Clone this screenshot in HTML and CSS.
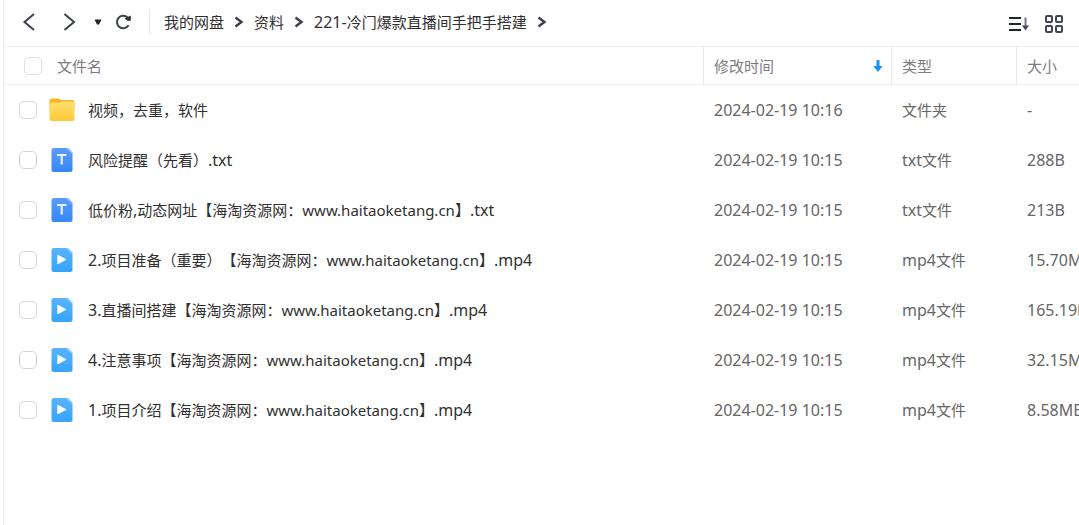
FILE: index.html
```html
<!DOCTYPE html>
<html lang="zh-CN">
<head>
<meta charset="utf-8">
<title>我的网盘</title>
<link rel="stylesheet" href="styles.css">
</head>
<body>
<svg class="sprite" aria-hidden="true">
  <defs>
    <linearGradient id="gold" x1="0" y1="0" x2="0" y2="1"><stop offset="0" stop-color="#ffdf70"/><stop offset="1" stop-color="#ffc935"/></linearGradient>
    <linearGradient id="blue" x1="0" y1="0" x2="0" y2="1"><stop offset="0" stop-color="#5b9bff"/><stop offset="1" stop-color="#3687f8"/></linearGradient>
    <linearGradient id="sky" x1="0" y1="0" x2="0" y2="1"><stop offset="0" stop-color="#58b4ff"/><stop offset="1" stop-color="#36a3fc"/></linearGradient>
  </defs>
  <symbol id="folder" viewBox="0 0 26 26">
    <path d="M.5 3.500Q.5 1.500 2.500 1.500H9.500L12.500 3H23Q25.500 3 25.500 5.500V12H.5Z" fill="#f9b325"/>
    <path d="M.5 8Q.5 5.500 3.500 5.500H11L14 4.500H22.500Q25.500 4.500 25.500 7.500V21.500Q25.500 24 23 24H3Q.5 24 .5 21.500Z" fill="url(#gold)"/>
  </symbol>
  <symbol id="txt" viewBox="0 0 26 26">
    <path d="M5 1H17L23.500 7V22.500Q23.500 25 21 25H5Q2.500 25 2.500 22.500V3.500Q2.500 1 5 1Z" fill="url(#blue)"/>
    <path d="M17 1H19L23.500 5.500V7Z" fill="#6fabff"/>
    <path d="M8 8H17.500M12.750 8V17.500" stroke="#e4efff" stroke-width="2.200" fill="none"/>
  </symbol>
  <symbol id="video" viewBox="0 0 26 26">
    <path d="M5 1H17L23.500 7V22.500Q23.500 25 21 25H5Q2.500 25 2.500 22.500V3.500Q2.500 1 5 1Z" fill="url(#sky)"/>
    <path d="M17 1H19L23.500 5.500V7Z" fill="#78c4ff"/>
    <path d="M9 8.500L16.500 12.500L9 16.500Z" fill="#fff" stroke="#fff" stroke-width="1.400" stroke-linejoin="round"/>
  </symbol>
  <symbol id="chevron" viewBox="0 0 10 12"><path d="M1.500 1.500L7.500 6L1.500 10.500" fill="none" stroke="#3c3e4b" stroke-width="2.400"/></symbol>
</svg>
<main class="panel">
  <header class="toolbar">
    <nav class="history" aria-label="导航">
      <button class="tool" aria-label="后退"><svg width="20" height="20" viewBox="0 0 20 20"><path d="M15 2L5.500 10L15 18" class="stroke"/></svg></button>
      <button class="tool tool-forward" aria-label="前进"><svg width="20" height="20" viewBox="0 0 20 20"><path d="M5.500 2L15 10L5.500 18" class="stroke"/></svg></button>
      <button class="tool tool-small" aria-label="历史记录"><svg width="8" height="6" viewBox="0 0 8 6"><path d="M.5 .5H7.500L5 5.500H3Z" fill="#23252d"/></svg></button>
      <button class="tool tool-refresh" aria-label="刷新"><svg width="18" height="18" viewBox="0 0 18 18"><path d="M13.500 4.300A6.300 6.300 0 1 0 14.600 12.300" class="stroke"/><path d="M10.500 5.500L16.800 2.500V7.500L14 8Z" fill="#2f323c"/></svg></button>
    </nav>
    <nav class="crumbs" aria-label="路径">
      <a href="#">我的网盘</a><svg class="sep"><use href="#chevron"/></svg>
      <a href="#">资料</a><svg class="sep"><use href="#chevron"/></svg>
      <a href="#"><span class="latin">221-</span>冷门爆款直播间手把手搭建</a><svg class="sep"><use href="#chevron"/></svg>
    </nav>
    <div class="views">
      <button class="tool" aria-label="排序"><svg width="20" height="16" viewBox="0 0 20 16"><path d="M0 2H12M0 8H12M0 14H12" stroke="#23252d" stroke-width="2"/><path d="M16.500 1.500V12" stroke="#747985" stroke-width="2"/><path d="M13 9.500H20L16.500 14.500Z" fill="#444954"/></svg></button>
      <button class="tool" aria-label="网格视图"><svg width="20" height="20" viewBox="0 0 20 20"><g fill="none" stroke="#414650" stroke-width="2"><rect x="2" y="2" width="6" height="6" rx="1"/><rect x="12" y="2" width="6" height="6" rx="1"/><rect x="2" y="12" width="6" height="6" rx="1"/><rect x="12" y="12" width="6" height="6" rx="1"/></g></svg></button>
    </div>
  </header>
  <table class="files">
    <colgroup><col><col class="col-date"><col class="col-type"><col class="col-size"></colgroup>
    <thead>
      <tr>
        <th scope="col"><div class="name name-head"><input type="checkbox" class="check" aria-label="全选">文件名</div></th>
        <th scope="col"><div class="sort">修改时间<svg width="10" height="14" viewBox="0 0 10 14"><path d="M3.500 1H6.500V7H9.500L5 13L.5 7H3.500Z" fill="#0f95fb"/></svg></div></th>
        <th scope="col">类型</th>
        <th scope="col">大小</th>
      </tr>
    </thead>
    <tbody>
      <tr><td><label class="name"><input type="checkbox" class="check"><svg class="icon"><use href="#folder"/></svg><span>视频，去重，软件</span></label></td><td><span class="latin">2024-02-19 10:16</span></td><td>文件夹</td><td><span class="latin">-</span></td></tr>
      <tr><td><label class="name"><input type="checkbox" class="check"><svg class="icon"><use href="#txt"/></svg><span>风险提醒（先看）<span class="latin">.txt</span></span></label></td><td><span class="latin">2024-02-19 10:15</span></td><td><span class="latin">txt</span>文件</td><td><span class="latin">288B</span></td></tr>
      <tr><td><label class="name"><input type="checkbox" class="check"><svg class="icon"><use href="#txt"/></svg><span>低价粉<span class="latin">,</span>动态网址【海淘资源网：<span class="latin site">www.haitaoketang.cn</span>】<span class="latin">.txt</span></span></label></td><td><span class="latin">2024-02-19 10:15</span></td><td><span class="latin">txt</span>文件</td><td><span class="latin">213B</span></td></tr>
      <tr><td><label class="name"><input type="checkbox" class="check"><svg class="icon"><use href="#video"/></svg><span><span class="latin">2.</span>项目准备（重要）【海淘资源网：<span class="latin site">www.haitaoketang.cn</span>】<span class="latin">.mp4</span></span></label></td><td><span class="latin">2024-02-19 10:15</span></td><td><span class="latin">mp4</span>文件</td><td><span class="latin">15.70MB</span></td></tr>
      <tr><td><label class="name"><input type="checkbox" class="check"><svg class="icon"><use href="#video"/></svg><span><span class="latin">3.</span>直播间搭建【海淘资源网：<span class="latin site">www.haitaoketang.cn</span>】<span class="latin">.mp4</span></span></label></td><td><span class="latin">2024-02-19 10:15</span></td><td><span class="latin">mp4</span>文件</td><td><span class="latin">165.19MB</span></td></tr>
      <tr><td><label class="name"><input type="checkbox" class="check"><svg class="icon"><use href="#video"/></svg><span><span class="latin">4.</span>注意事项【海淘资源网：<span class="latin site">www.haitaoketang.cn</span>】<span class="latin">.mp4</span></span></label></td><td><span class="latin">2024-02-19 10:15</span></td><td><span class="latin">mp4</span>文件</td><td><span class="latin">32.15MB</span></td></tr>
      <tr><td><label class="name"><input type="checkbox" class="check"><svg class="icon"><use href="#video"/></svg><span><span class="latin">1.</span>项目介绍【海淘资源网：<span class="latin site">www.haitaoketang.cn</span>】<span class="latin">.mp4</span></span></label></td><td><span class="latin">2024-02-19 10:15</span></td><td><span class="latin">mp4</span>文件</td><td><span class="latin">8.58MB</span></td></tr>
    </tbody>
  </table>
</main>
</body>
</html>
```
FILE: styles.css
```css
* { box-sizing: border-box; }
body {
  margin: 0;
  background: #fff;
  color: #303030;
  font: 15px/20px "Noto Sans CJK SC", sans-serif;
  text-spacing-trim: space-all;
}
.sprite { display: block; width: 0; height: 0; }
.latin { font-family: "Noto Sans", sans-serif; font-size: 16px; }
.latin.site { font-size: 15px; }
.panel {
  min-height: 100vh;
  margin-left: 3px;
  border-left: 1px solid #ebebeb;
  overflow: hidden;
}
.toolbar {
  display: flex;
  align-items: center;
  height: 47px;
  padding: 0 15px 2px;
  border-bottom: 1px solid #eeeff1;
}
.history {
  display: flex;
  align-items: center;
  height: 24px;
  padding-right: 16px;
  border-right: 1px solid #e6e6e8;
}
.tool {
  display: flex;
  align-items: center;
  justify-content: center;
  width: 20px;
  height: 20px;
  padding: 0;
  border: 0;
  background: none;
}
.tool-forward { margin-left: 20px; }
.tool-small { width: 8px; margin-left: 15px; }
.tool-refresh { margin-left: 11px; }
.stroke { fill: none; stroke: #3c404b; stroke-width: 2; }
.crumbs {
  display: flex;
  flex: 1;
  align-items: center;
  gap: 10px;
  padding-left: 14px;
  white-space: nowrap;
}
.crumbs a { color: #303030; text-decoration: none; }
.sep { width: 10px; height: 12px; }
.views { display: flex; gap: 15px; padding-top: 3px; }
.files {
  width: 100%;
  table-layout: fixed;
  border-collapse: separate;
  border-spacing: 0;
  color: #666;
}
.col-date { width: 188px; }
.col-type { width: 125px; }
.col-size { width: 63px; }
.files th, .files td {
  height: 50px;
  padding: 0 0 0 11px;
  text-align: left;
  white-space: nowrap;
}
.files th {
  height: 38px;
  padding-left: 10px;
  border-bottom: 1px solid #f0f0f2;
  border-left: 1px solid #e8e8ec;
  color: #7c7c80;
  font-weight: 400;
}
.files th:first-child { border-left: 0; }
.files th:first-child, .files td:first-child { padding-left: 15px; }
.name { display: flex; align-items: center; color: #303030; }
.name-head { gap: 15px; padding-left: 5px; color: #7c7c80; }
.check {
  appearance: none;
  width: 18px;
  height: 18px;
  margin: 0;
  border: 1px solid #cfd6de;
  border-radius: 5px;
  background: #fff;
}
.name-head .check { border-color: #e0e0e4; }
.icon { width: 26px; height: 26px; margin: 0 13px 0 12px; }
.sort {
  display: flex;
  align-items: center;
  justify-content: space-between;
  padding-right: 8px;
}
```
